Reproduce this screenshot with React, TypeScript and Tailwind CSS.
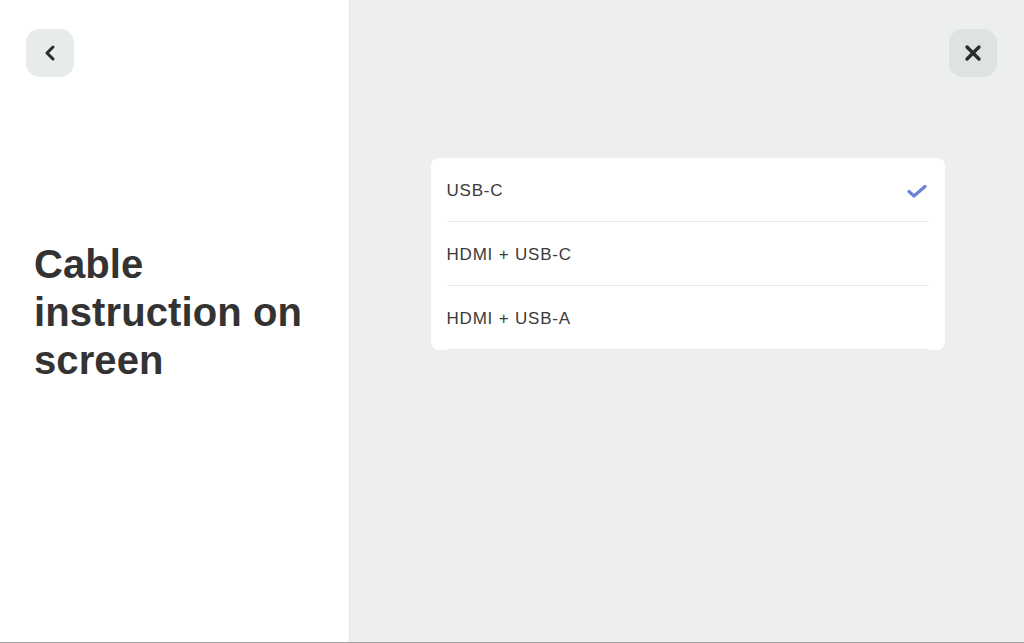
import { ChevronLeft, X } from "lucide-react";

const options = [
  { label: "USB-C", selected: true },
  { label: "HDMI + USB-C", selected: false },
  { label: "HDMI + USB-A", selected: false },
];

export default function App() {
  return (
    <div className="flex h-[643px] w-full border-b border-[#a3a3a3] font-['Liberation_Sans',Arial,sans-serif] text-[#333333]">
      {/* Left panel */}
      <div className="flex w-[350px] shrink-0 flex-col border-r border-[#e2e2e2] bg-white">
        <button className="ml-[26px] mt-[29px] flex h-12 w-12 items-center justify-center rounded-[14px] bg-[#e7ebeb]">
          <ChevronLeft className="h-6 w-6 text-[#2b2b2b]" strokeWidth={3} />
        </button>
        <h1 className="ml-[34px] mt-[163px] text-[40px] font-bold leading-[48px] tracking-[0.1px] text-[#333333]">
          Cable
          <br />
          instruction on
          <br />
          screen
        </h1>
      </div>

      {/* Right panel */}
      <div className="flex flex-1 flex-col bg-[#edeef0]">
        <div className="flex justify-end pr-[27px] pt-[29px]">
          <button className="flex h-12 w-12 items-center justify-center rounded-[14px] bg-[#dde2e3]">
            <X className="h-6 w-6 text-[#2b2b2b]" strokeWidth={3.4} />
          </button>
        </div>
        <div className="mt-[81px] flex justify-center pl-[1px]">
          <ul className="w-[514px] rounded-[8px] bg-white px-4">
            {options.map((o) => (
              <li
                key={o.label}
                className="flex h-16 items-center justify-between border-b border-[#e6e6e8] pt-[3px] text-[17px] tracking-[0.8px] text-[#3a3a3a]"
              >
                <span>{o.label}</span>
                {o.selected && (
                  <svg
                    width="22"
                    height="14"
                    viewBox="0 0 22 14"
                    fill="none"
                    className="mr-[1px] text-[#6a82d6]"
                  >
                    <path
                      d="M3 7.5 8 12 19 2.5"
                      stroke="currentColor"
                      strokeWidth="3.2"
                      strokeLinecap="round"
                      strokeLinejoin="round"
                    />
                  </svg>
                )}
              </li>
            ))}
          </ul>
        </div>
      </div>
    </div>
  );
}
